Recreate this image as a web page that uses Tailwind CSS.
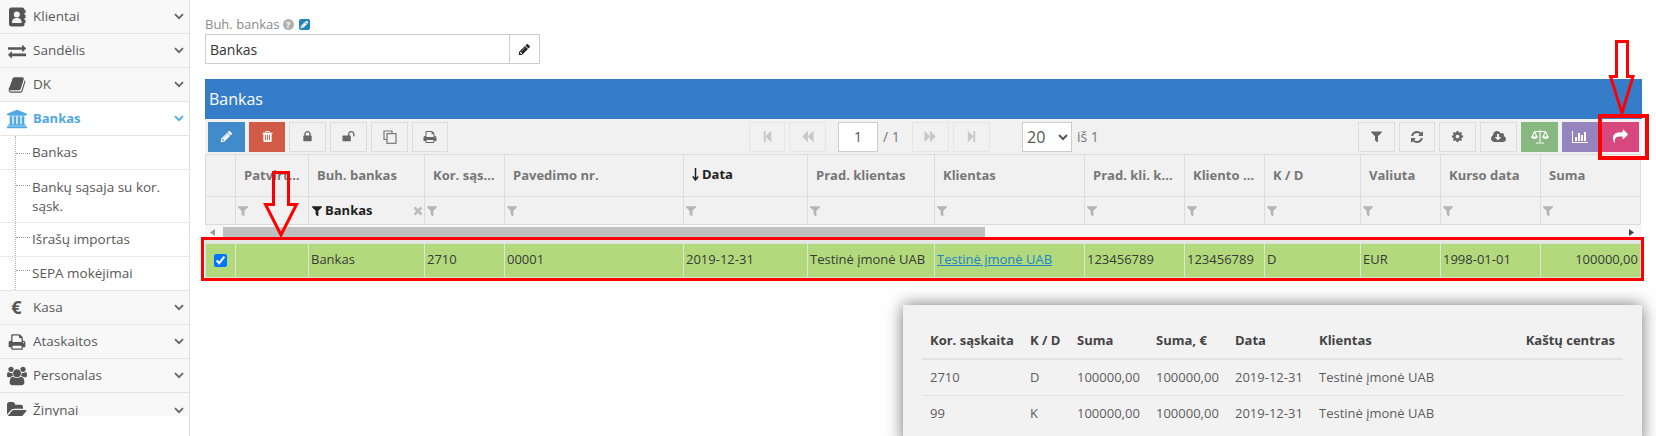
<!DOCTYPE html>
<html lang="lt">
<head>
<meta charset="utf-8">
<title>Bankas</title>
<script src="https://cdn.jsdelivr.net/npm/@tailwindcss/browser@4"></script>
</head>
<body class="m-0 bg-white">
<svg width="0" height="0" class="absolute">
  <defs>
    <symbol id="filter" viewBox="200 250 1392 1300"><path fill="currentColor" d="M1595 295q17 41-14 70l-493 493v742q0 42-39 59-13 5-25 5-27 0-45-19l-256-256q-19-19-19-45v-486l-493-493q-31-29-14-70 17-39 59-39h1280q42 0 59 39z"/></symbol>
    <symbol id="pencil" viewBox="0 0 1792 1792"><path fill="currentColor" d="M491 1536l91-91-235-235-91 91v107h128v128h107zm523-928q0-22-22-22-10 0-17 7l-542 542q-7 7-7 17 0 22 22 22 10 0 17-7l542-542q7-7 7-17zm-54-192l416 416-832 832h-416v-416zm683 96q0 53-37 90l-166 166-416-416 166-165q36-38 90-38 53 0 91 38l235 234q37 39 37 91z"/></symbol>
    <symbol id="chev" viewBox="0 0 10 7"><path d="M1 1.2 5 5.2 9 1.2" fill="none" stroke="currentColor" stroke-width="1.8"/></symbol>
    <symbol id="step" viewBox="0 0 1792 1792"><path fill="currentColor" d="M1363 141q19-19 32-13t13 32v1472q0 26-13 32t-32-13l-710-710q-9-9-13-19v678q0 26-19 45t-45 19h-128q-26 0-45-19t-19-45v-1408q0-26 19-45t45-19h128q26 0 45 19t19 45v678q4-10 13-19z"/></symbol>
    <symbol id="back" viewBox="0 0 1792 1792"><path fill="currentColor" d="M1683 141q19-19 32-13t13 32v1472q0 26-13 32t-32-13l-710-710q-9-9-13-19v710q0 26-13 32t-32-13l-710-710q-19-19-19-45t19-45l710-710q19-19 32-13t13 32v710q4-10 13-19z"/></symbol>
  </defs>
</svg>

<div class="relative flex h-[436px] w-[1656px] overflow-hidden font-['Open_Sans',sans-serif] text-[13px] text-[#393939]">

  <!-- Sidebar -->
  <aside class="h-full w-[190px] shrink-0 border-r border-[#e0e0e0] text-[13.5px] text-[#585858]">
    <div class="h-[416px] overflow-hidden">
      <div class="flex h-[34px] items-center border-b border-[#e5e5e5] bg-[#f8f8f8]">
        <span class="flex w-[33px] justify-center pl-[1px]"><svg class="h-[20px] w-[18px]" viewBox="0 0 18 20"><rect x="1" y="0.5" width="15.500" height="19" rx="2.500" fill="#555"/><rect x="16" y="3" width="1.500" height="3" fill="#555"/><rect x="16" y="8" width="1.500" height="3" fill="#555"/><rect x="16" y="13" width="1.500" height="3" fill="#555"/><circle cx="8.800" cy="7.500" r="3" fill="#f5f5f5"/><path d="M4 16c0-4 2-5 4.800-5s4.800 1 4.800 5z" fill="#f5f5f5"/></svg></span>
        <span class="flex-1">Klientai</span><svg class="mr-[5px] h-[7px] w-[10px] text-[#666]"><use href="#chev"/></svg>
      </div>
      <div class="flex h-[34px] items-center border-b border-[#e5e5e5] bg-[#f8f8f8]">
        <span class="flex w-[33px] justify-center"><svg class="h-[18px] w-[18px] text-[#555]" viewBox="0 0 1792 1792"><path fill="currentColor" d="M1792 1184v192q0 13-9.5 22.5t-22.5 9.5h-1376v192q0 13-9.5 22.5t-22.5 9.5q-12 0-24-10l-319-320q-9-9-9-22 0-14 9-23l320-320q9-9 23-9 13 0 22.5 9.5t9.5 22.5v192h1376q13 0 22.5 9.5t9.5 22.5zm0-544q0 14-9 23l-320 320q-9 9-23 9-13 0-22.5-9.5t-9.5-22.5v-192h-1376q-13 0-22.5-9.5t-9.5-22.5v-192q0-13 9.5-22.5t22.5-9.5h1376v-192q0-14 9-23t23-9q12 0 24 10l319 319q9 9 9 23z"/></svg></span>
        <span class="flex-1">Sandėlis</span><svg class="mr-[5px] h-[7px] w-[10px] text-[#666]"><use href="#chev"/></svg>
      </div>
      <div class="flex h-[34px] items-center border-b border-[#e5e5e5] bg-[#f8f8f8]">
        <span class="flex w-[33px] justify-center"><svg class="h-[18px] w-[18px] text-[#555]" viewBox="0 0 1792 1792"><path fill="currentColor" d="M1703 478q40 57 18 129l-275 906q-19 64-76.5 107.5t-122.5 43.5h-923q-77 0-148.5-53.5t-99.5-131.5q-24-67-2-127 0-4 3-27t4-37q1-8-3-21.5t-3-19.5q2-11 8-21t16.5-23.5 16.5-23.5q23-38 45-91.5t30-91.5q3-10 .5-30t-.5-28q3-11 17-28t17-23q21-36 42-92t25-90q1-9-2.5-32t.5-28q4-13 22-30.5t22-22.5q19-26 42.5-84.5t27.5-96.5q1-8-3-25.5t-2-26.5q2-8 9-18t18-23 17-21q8-12 16.5-30.5t15-35 16-36 19.5-32 26.5-23.5 36-11.5 47.5 5.5l-1 3q38-9 51-9h761q74 0 114 56t18 130l-274 906q-36 119-71.5 153.5t-128.5 34.5h-869q-27 0-38 15-11 16-1 43 24 70 144 70h923q29 0 56-15.5t35-41.5l300-987q7-22 5-57 38 15 59 43z"/></svg></span>
        <span class="flex-1">DK</span><svg class="mr-[5px] h-[7px] w-[10px] text-[#666]"><use href="#chev"/></svg>
      </div>
      <div class="flex h-[34px] items-center border-b border-[#e5e5e5] bg-white text-[13px] font-bold text-[#4fa8e4]">
        <span class="flex w-[33px] justify-center"><svg class="h-[20px] w-[20px]" viewBox="0 0 1920 1792"><path fill="currentColor" d="M960 0l960 384v128h-128q0 26-20.5 45t-48.5 19h-1526q-28 0-48.5-19t-20.5-45h-128v-128zm-704 640h256v768h128v-768h256v768h128v-768h256v768h128v-768h256v768h59q28 0 48.5 19t20.5 45v64h-1664v-64q0-26 20.5-45t48.5-19h59v-768zm1595 960q28 0 48.5 19t20.5 45v128h-1920v-128q0-26 20.5-45t48.5-19h1782z"/></svg></span>
        <span class="flex-1">Bankas</span><svg class="mr-[5px] h-[7px] w-[10px]"><use href="#chev"/></svg>
      </div>
      <div class="relative border-b border-[#e5e5e5] bg-white">
        <div class="absolute top-0 bottom-0 left-[15px] border-l border-dotted border-[#9db8d2]"></div>
        <div class="relative flex h-[34px] items-center border-b border-dotted border-[#d8d8d8] pl-[32px]"><span class="absolute top-[17px] left-[16px] w-[14px] border-t border-dotted border-[#9a9a9a]"></span>Bankas</div>
        <div class="relative h-[53px] border-b border-dotted border-[#d8d8d8] pt-[8px] pl-[32px] leading-[19px]"><span class="absolute top-[15px] left-[16px] w-[14px] border-t border-dotted border-[#9a9a9a]"></span>Bankų sąsaja su kor. sąsk.</div>
        <div class="relative flex h-[34px] items-center border-b border-dotted border-[#d8d8d8] pl-[32px]"><span class="absolute top-[14px] left-[16px] w-[14px] border-t border-dotted border-[#9a9a9a]"></span>Išrašų importas</div>
        <div class="relative flex h-[33px] items-center pl-[32px]"><span class="absolute top-[13px] left-[16px] w-[14px] border-t border-dotted border-[#9a9a9a]"></span>SEPA mokėjimai</div>
      </div>
      <div class="flex h-[34px] items-center border-b border-[#e5e5e5] bg-[#f8f8f8]">
        <span class="flex w-[33px] justify-center text-[18px] font-bold text-[#555]">€</span>
        <span class="flex-1">Kasa</span><svg class="mr-[5px] h-[7px] w-[10px] text-[#666]"><use href="#chev"/></svg>
      </div>
      <div class="flex h-[34px] items-center border-b border-[#e5e5e5] bg-[#f8f8f8]">
        <span class="flex w-[33px] justify-center"><svg class="h-[18px] w-[18px] text-[#555]" viewBox="0 0 1792 1792"><path fill="currentColor" d="M448 1536h896v-256h-896v256zm0-640h896v-384h-160q-40 0-68-28t-28-68v-160h-640v640zm1152 64q0-26-19-45t-45-19-45 19-19 45 19 45 45 19 45-19 19-45zm128 0v416q0 13-9.5 22.5t-22.5 9.5h-224v160q0 40-28 68t-68 28h-960q-40 0-68-28t-28-68v-160h-224q-13 0-22.5-9.5t-9.5-22.5v-416q0-79 56.5-135.5t135.5-56.5h64v-544q0-40 28-68t68-28h672q40 0 88 20t76 48l152 152q28 28 48 76t20 88v256h64q79 0 135.5 56.5t56.5 135.5z"/></svg></span>
        <span class="flex-1">Ataskaitos</span><svg class="mr-[5px] h-[7px] w-[10px] text-[#666]"><use href="#chev"/></svg>
      </div>
      <div class="flex h-[34px] items-center border-b border-[#e5e5e5] bg-[#f8f8f8]">
        <span class="flex w-[33px] justify-center"><svg class="h-[20px] w-[20px] text-[#555]" viewBox="0 0 1920 1792"><path fill="currentColor" d="M593 896q-162 5-265 128h-134q-82 0-138-40.5t-56-118.5q0-353 124-353 6 0 43.5 21t97.5 42.5 119 21.5q67 0 133-23-5 37-5 66 0 139 81 256zm1071 637q0 120-73 189.5t-194 69.5h-874q-121 0-194-69.5t-73-189.5q0-53 3.5-103.5t14-109 26.5-108.5 43-97.5 62-81 85.5-53.5 111.5-20q10 0 43 21.5t73 48 107 48 135 21.5 135-21.5 107-48 73-48 43-21.5q61 0 111.5 20t85.5 53.5 62 81 43 97.5 26.5 108.5 14 109 3.5 103.5zm-1024-1277q0 106-75 181t-181 75-181-75-75-181 75-181 181-75 181 75 75 181zm704 384q0 159-112.5 271.5t-271.5 112.5-271.5-112.5-112.5-271.5 112.5-271.5 271.5-112.5 271.5 112.5 112.5 271.5zm576 225q0 78-56 118.5t-138 40.5h-134q-103-123-265-128 81-117 81-256 0-29-5-66 66 23 133 23 59 0 119-21.5t97.5-42.5 43.5-21q124 0 124 353zm-128-609q0 106-75 181t-181 75-181-75-75-181 75-181 181-75 181 75 75 181z"/></svg></span>
        <span class="flex-1">Personalas</span><svg class="mr-[5px] h-[7px] w-[10px] text-[#666]"><use href="#chev"/></svg>
      </div>
      <div class="flex h-[34px] items-center bg-[#f8f8f8]">
        <span class="flex w-[33px] justify-center"><svg class="h-[20px] w-[20px] text-[#555]" viewBox="0 0 1920 1792"><path fill="currentColor" d="M1879 952q0 31-31 66l-336 396q-43 51-120.5 86.5t-143.5 35.5h-1088q-34 0-60.5-13t-26.5-43q0-31 31-66l336-396q43-51 120.5-86.5t143.5-35.5h1088q34 0 60.5 13t26.5 43zm-343-344v160h-832q-94 0-197 47.5t-164 119.5l-337 396-5 6q0-4-.5-12.5t-.5-12.5v-960q0-92 66-158t158-66h320q92 0 158 66t66 158v32h544q92 0 158 66t66 158z"/></svg></span>
        <span class="flex-1">Žinynai</span><svg class="mr-[5px] h-[7px] w-[10px] text-[#666]"><use href="#chev"/></svg>
      </div>
    </div>
  </aside>

  <!-- Main -->
  <main class="w-[1466px] pl-[15px]">
    <div class="flex h-[34px] items-end pb-[1px] leading-[18px] text-[#8a8a8a]">
      <span>Buh. bankas</span>
      <span class="mb-[3px] ml-[3px] flex h-[11px] w-[11px] items-center justify-center rounded-full bg-[#b0b0b0] text-[9px] leading-none font-bold text-white">?</span>
      <span class="mb-[3px] ml-[5px] flex h-[11px] w-[11px] items-center justify-center rounded-[2px] bg-[#2283b8] text-white"><svg class="h-[9px] w-[9px]"><use href="#pencil"/></svg></span>
    </div>
    <div class="flex h-[30px] w-[335px]">
      <div class="flex h-full w-[305px] items-center border border-[#ccc] pl-[4px] text-[14px] text-[#333]">Bankas</div>
      <button class="flex h-full w-[30px] items-center justify-center border border-l-0 border-[#ccc] bg-white text-[#222]"><svg class="h-[13px] w-[13px]"><use href="#pencil"/></svg></button>
    </div>

    <section class="mt-[15px] w-[1437px]">
      <h2 class="flex h-[40px] items-center bg-[#367dc9] pl-[4px] text-[16px] font-normal text-white">Bankas</h2>
      <div class="flex h-[35px] items-center bg-[#f1f1f1] pr-[3px] pl-[3px]">
        <div class="flex gap-[4px]">
          <button class="flex h-[30px] w-[37px] items-center justify-center bg-[#428bca] text-white"><svg class="h-[13px] w-[13px]"><use href="#pencil"/></svg></button>
          <button class="flex h-[30px] w-[36px] items-center justify-center bg-[#d15b47] text-white"><svg class="h-[13px] w-[13px]" viewBox="0 0 1792 1792"><path fill="currentColor" d="M704 1376v-704q0-14-9-23t-23-9h-64q-14 0-23 9t-9 23v704q0 14 9 23t23 9h64q14 0 23-9t9-23zm256 0v-704q0-14-9-23t-23-9h-64q-14 0-23 9t-9 23v704q0 14 9 23t23 9h64q14 0 23-9t9-23zm256 0v-704q0-14-9-23t-23-9h-64q-14 0-23 9t-9 23v704q0 14 9 23t23 9h64q14 0 23-9t9-23zm-544-992h448l-48-117q-7-9-17-11h-317q-10 2-17 11zm928 32v64q0 14-9 23t-23 9h-96v948q0 83-47 143.5t-113 60.5h-832q-66 0-113-58.5t-47-141.5v-952h-96q-14 0-23-9t-9-23v-64q0-14 9-23t23-9h309l70-167q15-37 54-63t79-26h320q40 0 79 26t54 63l70 167h309q14 0 23 9t9 23z"/></svg></button>
          <button class="flex h-[30px] w-[37px] items-center justify-center border border-[#ddd] text-[#666]"><svg class="h-[13px] w-[13px]" viewBox="0 0 1792 1792"><path fill="currentColor" d="M640 768h512v-192q0-106-75-181t-181-75-181 75-75 181v192zm832 96v576q0 40-28 68t-68 28h-960q-40 0-68-28t-28-68v-576q0-40 28-68t68-28h32v-192q0-184 132-316t316-132 316 132 132 316v192h32q40 0 68 28t28 68z"/></svg></button>
          <button class="flex h-[30px] w-[37px] items-center justify-center border border-[#ddd] text-[#666]"><svg class="h-[13px] w-[13px]" viewBox="0 0 1792 1792"><path fill="currentColor" d="M1728 576v256q0 26-19 45t-45 19h-64q-26 0-45-19t-19-45v-256q0-106-75-181t-181-75-181 75-75 181v192h96q40 0 68 28t28 68v576q0 40-28 68t-68 28h-960q-40 0-68-28t-28-68v-576q0-40 28-68t68-28h672v-192q0-185 131.5-316.5t316.5-131.5 316.5 131.5 131.5 316.5z"/></svg></button>
          <button class="flex h-[30px] w-[37px] items-center justify-center border border-[#ddd] text-[#777]"><svg class="h-[14px] w-[14px]" viewBox="0 0 14 14" fill="none" stroke="currentColor" stroke-width="1.2"><path d="M9 3V1H1v8.500h3"/><rect x="4" y="3.600" width="9" height="9.700"/></svg></button>
          <button class="flex h-[30px] w-[36px] items-center justify-center border border-[#ddd] text-[#666]"><svg class="h-[14px] w-[14px]" viewBox="0 0 1792 1792"><path fill="currentColor" d="M448 1536h896v-256h-896v256zm0-640h896v-384h-160q-40 0-68-28t-28-68v-160h-640v640zm1152 64q0-26-19-45t-45-19-45 19-19 45 19 45 45 19 45-19 19-45zm128 0v416q0 13-9.5 22.5t-22.5 9.5h-224v160q0 40-28 68t-68 28h-960q-40 0-68-28t-28-68v-160h-224q-13 0-22.5-9.5t-9.5-22.5v-416q0-79 56.5-135.5t135.5-56.5h64v-544q0-40 28-68t68-28h672q40 0 88 20t76 48l152 152q28 28 48 76t20 88v256h64q79 0 135.5 56.5t56.5 135.5z"/></svg></button>
        </div>
        <div class="ml-[301px] flex items-center">
          <button class="flex h-[30px] w-[36px] items-center justify-center border border-[#e6e6e6] text-[#c8c8c8]"><svg class="h-[13px] w-[13px]"><use href="#step"/></svg></button>
          <button class="ml-[4px] flex h-[30px] w-[37px] items-center justify-center border border-[#e6e6e6] text-[#c8c8c8]"><svg class="h-[13px] w-[13px]"><use href="#back"/></svg></button>
          <input class="ml-[12px] h-[30px] w-[40px] border border-[#ccc] bg-white text-center text-[14px] text-[#555]" value="1">
          <span class="ml-[5px] w-[29px] text-[14px] text-[#777]">/ 1</span>
          <button class="flex h-[30px] w-[37px] -scale-x-100 items-center justify-center border border-[#e6e6e6] text-[#c8c8c8]"><svg class="h-[13px] w-[13px]"><use href="#back"/></svg></button>
          <button class="ml-[4px] flex h-[30px] w-[37px] -scale-x-100 items-center justify-center border border-[#e6e6e6] text-[#c8c8c8]"><svg class="h-[13px] w-[13px]"><use href="#step"/></svg></button>
          <select class="ml-[32px] h-[30px] w-[50px] border border-[#ccc] bg-white text-[16px] text-[#555]"><option>20</option></select>
          <span class="ml-[5px] text-[14px] text-[#777]">iš 1</span>
        </div>
        <div class="ml-auto flex gap-[4px]">
          <button class="flex h-[30px] w-[37px] items-center justify-center border border-[#ddd] text-[#666]"><svg class="h-[11px] w-[11px]"><use href="#filter"/></svg></button>
          <button class="flex h-[30px] w-[36px] items-center justify-center border border-[#ddd] text-[#666]"><svg class="h-[14px] w-[14px]" viewBox="0 0 1792 1792"><path fill="currentColor" d="M1639 1056q0 5-1 7-64 268-268 434.5t-478 166.5q-146 0-282.5-55t-243.5-157l-129 129q-19 19-45 19t-45-19-19-45v-448q0-26 19-45t45-19h448q26 0 45 19t19 45-19 45l-137 137q71 66 161 102t187 36q134 0 250-65t186-179q11-17 53-117 8-23 30-23h192q13 0 22.5 9.5t9.5 22.5zm25-800v448q0 26-19 45t-45 19h-448q-26 0-45-19t-19-45 19-45l138-138q-148-137-349-137-134 0-250 65t-186 179q-11 17-53 117-8 23-30 23h-199q-13 0-22.5-9.5t-9.5-22.5v-7q65-268 270-434.5t480-166.5q146 0 284 55.5t245 156.5l130-129q19-19 45-19t45 19 19 45z"/></svg></button>
          <button class="flex h-[30px] w-[37px] items-center justify-center border border-[#ddd] text-[#666]"><svg class="h-[13px] w-[13px]" viewBox="0 0 1792 1792"><path fill="currentColor" d="M1152 896q0-106-75-181t-181-75-181 75-75 181 75 181 181 75 181-75 75-181zm512-109v222q0 12-8 23t-20 13l-185 28q-19 54-39 91 35 50 107 138 10 12 10 25t-9 23q-27 37-99 108t-94 71q-12 0-26-9l-138-108q-44 23-91 38-16 136-29 186-7 28-36 28h-222q-14 0-24.500-8.500t-11.500-21.500l-28-184q-49-16-90-37l-141 107q-10 9-25 9-14 0-25-11-126-114-165-168-7-10-7-23 0-12 8-23 15-21 51-66.500t54-70.500q-27-50-41-99l-183-27q-13-2-21-12.500t-8-23.500v-222q0-12 8-23t19-13l186-28q14-46 39-92-40-57-107-138-10-12-10-24 0-10 9-23 26-36 98.500-107.500t94.500-71.500q13 0 26 10l138 107q44-23 91-38 16-136 29-186 7-28 36-28h222q14 0 24.500 8.500t11.500 21.500l28 184q49 16 90 37l142-107q9-9 24-9 13 0 25 10 129 119 165 170 7 8 7 22 0 12-8 23-15 21-51 66.500t-54 70.500q26 50 41 98l183 28q13 2 21 12.500t8 23.500z"/></svg></button>
          <button class="flex h-[30px] w-[37px] items-center justify-center border border-[#ddd] text-[#666]"><svg class="h-[14px] w-[15px]" viewBox="0 0 1920 1792"><path fill="currentColor" d="M1280 928q0-14-9-23t-23-9h-224v-352q0-13-9.500-22.500t-22.500-9.500h-192q-13 0-22.500 9.500t-9.500 22.500v352h-224q-13 0-22.500 9.500t-9.500 22.500q0 14 9 23l352 352q9 9 23 9t23-9l351-351q10-12 10-24zm640 224q0 159-112.500 271.500t-271.500 112.500h-1088q-185 0-316.500-131.500t-131.500-316.500q0-130 70-240t188-165q-2-30-2-43 0-212 150-362t362-150q156 0 285.500 87t188.500 231q71-62 166-62 106 0 181 75t75 181q0 76-41 138 130 31 213.500 135.500t83.500 238.500z"/></svg></button>
          <button class="flex h-[30px] w-[37px] items-center justify-center bg-[#87b87f] text-white"><svg class="h-[15px] w-[18px]" viewBox="0 0 18 15" fill="none" stroke="currentColor" stroke-width="1.1"><path d="M9 1v12M5 14h8M3.500 2.500h11M3.500 2.500 1 8M3.500 2.500 6 8M14.500 2.500 12 8M14.500 2.500 17 8"/><path d="M0.800 8h5.400c-.4 1.700-5 1.700-5.400 0zM11.800 8h5.400c-.4 1.700-5 1.700-5.400 0z" fill="currentColor"/></svg></button>
          <button class="flex h-[30px] w-[36px] items-center justify-center bg-[#9585bf] text-white"><svg class="h-[14px] w-[16px]" viewBox="0 0 2048 1792"><path fill="currentColor" d="M640 896v512h-256v-512h256zm384-512v1024h-256v-1024h256zm1024 1152v128h-2048v-1536h128v1408h1920zm-640-896v768h-256v-768h256zm384-384v1152h-256v-1152h256z"/></svg></button>
          <button class="flex h-[30px] w-[37px] items-center justify-center bg-[#d6487e] text-white"><svg class="h-[15px] w-[15px]" viewBox="0 0 1792 1792"><path fill="currentColor" d="M1792 640q0 26-19 45l-512 512q-19 19-45 19t-45-19-19-45v-256h-224q-98 0-175.500 6t-154 21.500-133 42.500-105.500 69.500-80 101-48.500 138.500-17.500 181q0 55 5 123 0 6 2.500 23.500t2.500 26.500q0 15-8.500 25t-23.500 10q-16 0-28-17-7-9-13-22t-13.500-30-10.500-24q-127-285-127-451 0-199 53-333 162-403 875-403h224v-256q0-26 19-45t45-19 45 19l512 512q19 19 19 45z"/></svg></button>
        </div>
      </div>

      <table class="w-[1436px] table-fixed border-collapse bg-[#f1f1f1]">
        <colgroup>
          <col class="w-[30px]"><col class="w-[73px]"><col class="w-[116px]"><col class="w-[80px]"><col class="w-[179px]"><col class="w-[124px]"><col class="w-[127px]"><col class="w-[150px]"><col class="w-[100px]"><col class="w-[80px]"><col class="w-[96px]"><col class="w-[80px]"><col class="w-[100px]"><col class="w-[100px]">
        </colgroup>
        <thead class="text-left font-bold text-[#777]">
          <tr class="h-[42px] [&>th]:truncate [&>th]:border [&>th]:border-[#dcdcdc] [&>th]:px-[8px] [&>th]:font-bold">
            <th></th><th>Patvirtinta</th><th>Buh. bankas</th><th>Kor. sąskaita</th><th>Pavedimo nr.</th>
            <th class="text-[#222]"><span class="inline-flex items-center gap-[3px]"><svg class="h-[13px] w-[7px]" viewBox="0 0 7 13"><path d="M3.500 0v11M.8 8.500l2.700 3.500 2.700-3.500" fill="none" stroke="#222" stroke-width="1.500"/></svg>Data</span></th>
            <th>Prad. klientas</th><th>Klientas</th><th>Prad. kli. kodas</th><th>Kliento kodas</th><th>K / D</th><th>Valiuta</th><th>Kurso data</th><th>Suma</th>
          </tr>
        </thead>
        <tbody>
          <tr class="h-[28px] text-[#b5b5b5] [&>td]:border [&>td]:border-[#dcdcdc] [&>td]:pl-[2px]">
            <td></td>
            <td><svg class="h-[10px] w-[10px]"><use href="#filter"/></svg></td>
            <td class="text-[#222]"><div class="flex items-center font-bold"><svg class="mr-[3px] ml-[1px] h-[10px] w-[10px]"><use href="#filter"/></svg>Bankas<svg class="mr-[1px] ml-auto h-[10px] w-[10px] text-[#bdbdbd]" viewBox="0 0 10 10"><path d="M1.500 1.500l7 7M8.500 1.500l-7 7" stroke="currentColor" stroke-width="2.600"/></svg></div></td>
            <td><svg class="h-[10px] w-[10px]"><use href="#filter"/></svg></td>
            <td><svg class="h-[10px] w-[10px]"><use href="#filter"/></svg></td>
            <td><svg class="h-[10px] w-[10px]"><use href="#filter"/></svg></td>
            <td><svg class="h-[10px] w-[10px]"><use href="#filter"/></svg></td>
            <td><svg class="h-[10px] w-[10px]"><use href="#filter"/></svg></td>
            <td><svg class="h-[10px] w-[10px]"><use href="#filter"/></svg></td>
            <td><svg class="h-[10px] w-[10px]"><use href="#filter"/></svg></td>
            <td><svg class="h-[10px] w-[10px]"><use href="#filter"/></svg></td>
            <td><svg class="h-[10px] w-[10px]"><use href="#filter"/></svg></td>
            <td><svg class="h-[10px] w-[10px]"><use href="#filter"/></svg></td>
            <td><svg class="h-[10px] w-[10px]"><use href="#filter"/></svg></td>
          </tr>
        </tbody>
      </table>
      <div class="flex h-[12px] w-[1437px] items-end bg-[#f7f7f7] pl-[5px] text-[#999]">
        <svg class="mb-[1px] h-[7px] w-[5px]" viewBox="0 0 5 7"><path d="M5 0v7L0 3.500z" fill="currentColor"/></svg>
        <div class="ml-[8px] h-[10px] w-[762px] bg-[#bfbfbf]"></div>
        <svg class="mr-[8px] mb-[1px] ml-auto h-[7px] w-[5px] text-[#444]" viewBox="0 0 5 7"><path d="M0 0v7L5 3.500z" fill="currentColor"/></svg>
      </div>
      <div class="h-[6px] w-[1436px] bg-[#e6e6e6]"></div>
      <table class="w-[1436px] table-fixed border-collapse bg-[#b2d97c] text-[13px] text-[#393939]">
        <colgroup>
          <col class="w-[30px]"><col class="w-[73px]"><col class="w-[116px]"><col class="w-[80px]"><col class="w-[179px]"><col class="w-[124px]"><col class="w-[127px]"><col class="w-[150px]"><col class="w-[100px]"><col class="w-[80px]"><col class="w-[96px]"><col class="w-[80px]"><col class="w-[100px]"><col class="w-[100px]">
        </colgroup>
        <tbody>
          <tr class="h-[34px] [&>td]:truncate [&>td]:border [&>td]:border-[#dde5d4] [&>td]:px-[2px] [&>td]:pb-[1px]">
            <td class="text-center"><input type="checkbox" checked class="align-middle"></td>
            <td></td><td>Bankas</td><td>2710</td><td>00001</td><td>2019-12-31</td><td>Testinė įmonė UAB</td>
            <td><a href="#" class="text-[#2283c9] underline">Testinė įmonė UAB</a></td>
            <td>123456789</td><td>123456789</td><td>D</td><td>EUR</td><td>1998-01-01</td><td class="text-right">100000,00</td>
          </tr>
        </tbody>
      </table>
    </section>

    <section class="mt-[27px] ml-[698px] h-[140px] w-[739px] bg-[#f2f2f2] px-[19px] pt-[19px] shadow-[0_0_16px_rgba(0,0,0,0.55)]">
      <table class="w-[701px] table-fixed border-collapse text-left text-[13px] text-[#5c5c5c]">
        <colgroup><col class="w-[100px]"><col class="w-[47px]"><col class="w-[79px]"><col class="w-[79px]"><col class="w-[84px]"><col class="w-[205px]"><col class="w-[107px]"></colgroup>
        <thead class="font-bold text-[#444]">
          <tr class="h-[35px] border-b-2 border-[#e2e2e2] [&>th]:px-[8px] [&>th]:font-bold [&>th]:whitespace-nowrap">
            <th>Kor. sąskaita</th><th>K / D</th><th>Suma</th><th>Suma, €</th><th>Data</th><th>Klientas</th><th class="text-right">Kaštų centras</th>
          </tr>
        </thead>
        <tbody>
          <tr class="h-[36px] border-b border-[#e2e2e2] [&>td]:px-[8px] [&>td]:whitespace-nowrap"><td>2710</td><td>D</td><td>100000,00</td><td>100000,00</td><td>2019-12-31</td><td>Testinė įmonė UAB</td><td></td></tr>
          <tr class="h-[36px] [&>td]:px-[8px] [&>td]:whitespace-nowrap"><td>99</td><td>K</td><td>100000,00</td><td>100000,00</td><td>2019-12-31</td><td>Testinė įmonė UAB</td><td></td></tr>
        </tbody>
      </table>
    </section>
  </main>

  <!-- Red annotations over the page -->
  <div class="pointer-events-none absolute top-[237px] left-[201px] h-[44px] w-[1443px] border-[3.500px] border-[#ff0000]"></div>
  <div class="pointer-events-none absolute top-[114px] left-[1598px] h-[46px] w-[51px] border-4 border-[#ff0000]"></div>
  <svg class="pointer-events-none absolute top-[39px] left-[1607px] h-[76px] w-[30px]" viewBox="0 0 30 76" fill="none" stroke="#ff0000" stroke-width="3"><path d="M9.500 2.500H20.500V37.500H26L15 74 3.500 37.500H9.500Z"/></svg>
  <svg class="pointer-events-none absolute top-[170px] left-[262px] h-[68px] w-[38px]" viewBox="0 0 38 68" fill="none" stroke="#ff0000" stroke-width="3"><path d="M11.500 2.500H26.500V34.500H34.500L19 65 3.500 34.500H11.500Z"/></svg>
</div>
</body>
</html>
